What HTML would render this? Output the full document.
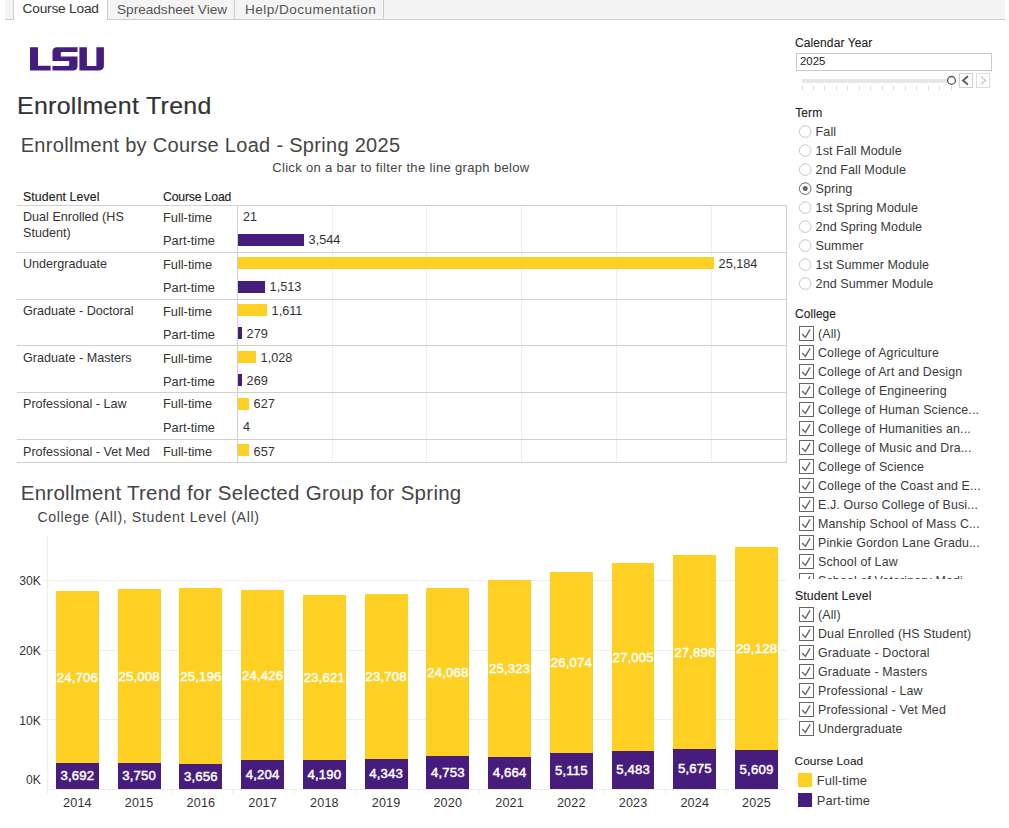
<!DOCTYPE html>
<html><head><meta charset="utf-8"><style>
html,body{margin:0;padding:0;background:#fff;}
body{width:1009px;height:828px;position:relative;overflow:hidden;font-family:"Liberation Sans", sans-serif;}
.t{position:absolute;white-space:nowrap;}
.r{position:absolute;}
</style></head><body>
<div class="r" style="left:5.0px;top:0.0px;width:1000.0px;height:19.0px;background:#f4f4f4;"></div>
<div class="r" style="left:5.0px;top:19.0px;width:1000.0px;height:1.0px;background:#cccccc;"></div>
<div class="r" style="left:13.0px;top:0.0px;width:95.0px;height:20.0px;background:#ffffff;border-left:1px solid #ccc;border-right:1px solid #ccc;box-sizing:border-box;"></div>
<div class="r" style="left:234.0px;top:0.0px;width:1.0px;height:19.0px;background:#cccccc;"></div>
<div class="r" style="left:383.0px;top:0.0px;width:1.0px;height:19.0px;background:#cccccc;"></div>
<div class="t" style="left:22.6px;top:2.3px;font-size:13.7px;line-height:13.7px;color:#333;letter-spacing:-0.2px;">Course Load</div>
<div class="t" style="left:117.0px;top:2.5px;font-size:13.6px;line-height:13.6px;color:#555;">Spreadsheet View</div>
<div class="t" style="left:245.0px;top:2.5px;font-size:13.6px;line-height:13.6px;color:#555;letter-spacing:0.45px;">Help/Documentation</div>
<svg class="r" style="left:0;top:0" width="120" height="80" viewBox="0 0 120 80">
<g fill="#461D7C">
<path d="M30 47.3h8v18.5h12.6v4.6H30z"/>
<path d="M57 47.3H77.5V52H62Q60.8 52 60.8 53.2V56.5H77.5V65.9Q77.5 70.4 73 70.4H52.5V66H68Q69.2 66 69.2 64.8V61H52.5V51.8Q52.5 47.3 57 47.3z"/>
<path d="M79.4 47.3h7.5V66h9.5V47.3h7.5V65.6Q103.9 70.4 99.1 70.4H79.4z"/>
</g></svg>
<div class="t" style="left:17.2px;top:94.9px;font-size:23.6px;line-height:23.6px;color:#333;transform:scaleX(1.055);transform-origin:0 0;letter-spacing:0.3px;-webkit-text-stroke:0.2px #333;">Enrollment Trend</div>
<div class="t" style="left:20.7px;top:134.9px;font-size:20px;line-height:20px;color:#444;letter-spacing:0.3px;">Enrollment by Course Load - Spring 2025</div>
<div class="t" style="left:272.2px;top:160.9px;font-size:13px;line-height:13px;color:#444;letter-spacing:0.34px;">Click on a bar to filter the line graph below</div>
<div class="t" style="left:23.0px;top:190.8px;font-size:12.3px;line-height:12.3px;color:#222;letter-spacing:0.1px;-webkit-text-stroke:0.15px #222;">Student Level</div>
<div class="t" style="left:163.0px;top:190.9px;font-size:12.2px;line-height:12.2px;color:#222;letter-spacing:-0.15px;-webkit-text-stroke:0.15px #222;">Course Load</div>
<div class="r" style="left:332.0px;top:205.0px;width:1.0px;height:257.0px;background:#eeeeee;"></div>
<div class="r" style="left:426.0px;top:205.0px;width:1.0px;height:257.0px;background:#eeeeee;"></div>
<div class="r" style="left:521.0px;top:205.0px;width:1.0px;height:257.0px;background:#eeeeee;"></div>
<div class="r" style="left:616.0px;top:205.0px;width:1.0px;height:257.0px;background:#eeeeee;"></div>
<div class="r" style="left:711.0px;top:205.0px;width:1.0px;height:257.0px;background:#eeeeee;"></div>
<div class="r" style="left:17.0px;top:205.0px;width:770.0px;height:1.0px;background:#d0d0d0;"></div>
<div class="r" style="left:17.0px;top:252.0px;width:770.0px;height:1.0px;background:#d0d0d0;"></div>
<div class="r" style="left:17.0px;top:299.0px;width:770.0px;height:1.0px;background:#d0d0d0;"></div>
<div class="r" style="left:17.0px;top:345.0px;width:770.0px;height:1.0px;background:#d0d0d0;"></div>
<div class="r" style="left:17.0px;top:392.0px;width:770.0px;height:1.0px;background:#d0d0d0;"></div>
<div class="r" style="left:17.0px;top:439.0px;width:770.0px;height:1.0px;background:#d0d0d0;"></div>
<div class="r" style="left:17.0px;top:462.0px;width:770.0px;height:1.0px;background:#d0d0d0;"></div>
<div class="r" style="left:237.0px;top:205.0px;width:1.0px;height:258.0px;background:#d0d0d0;"></div>
<div class="r" style="left:786.0px;top:205.0px;width:1.0px;height:258.0px;background:#d0d0d0;"></div>
<div class="t" style="left:23.0px;top:211.1px;font-size:12.6px;line-height:12.6px;color:#333;">Dual Enrolled (HS</div>
<div class="t" style="left:23.0px;top:226.8px;font-size:12.6px;line-height:12.6px;color:#333;">Student)</div>
<div class="t" style="left:163.0px;top:211.8px;font-size:12.8px;line-height:12.8px;color:#333;">Full-time</div>
<div class="t" style="left:243.0px;top:211.2px;font-size:12.7px;line-height:12.7px;color:#333;">21</div>
<div class="t" style="left:163.0px;top:235.0px;font-size:12.8px;line-height:12.8px;color:#333;">Part-time</div>
<div class="r" style="left:238.0px;top:233.7px;width:66.0px;height:12.0px;background:#461D7C;"></div>
<div class="t" style="left:308.6px;top:234.4px;font-size:12.7px;line-height:12.7px;color:#333;">3,544</div>
<div class="t" style="left:23.0px;top:257.8px;font-size:12.6px;line-height:12.6px;color:#333;">Undergraduate</div>
<div class="t" style="left:163.0px;top:258.5px;font-size:12.8px;line-height:12.8px;color:#333;">Full-time</div>
<div class="r" style="left:238.0px;top:257.1px;width:476.0px;height:12.0px;background:#FDD023;"></div>
<div class="t" style="left:718.6px;top:257.9px;font-size:12.7px;line-height:12.7px;color:#333;">25,184</div>
<div class="t" style="left:163.0px;top:281.7px;font-size:12.8px;line-height:12.8px;color:#333;">Part-time</div>
<div class="r" style="left:238.0px;top:280.5px;width:27.0px;height:12.0px;background:#461D7C;"></div>
<div class="t" style="left:269.6px;top:281.1px;font-size:12.7px;line-height:12.7px;color:#333;">1,513</div>
<div class="t" style="left:23.0px;top:304.9px;font-size:12.6px;line-height:12.6px;color:#333;">Graduate - Doctoral</div>
<div class="t" style="left:163.0px;top:305.6px;font-size:12.8px;line-height:12.8px;color:#333;">Full-time</div>
<div class="r" style="left:238.0px;top:303.9px;width:29.0px;height:12.0px;background:#FDD023;"></div>
<div class="t" style="left:271.6px;top:305.0px;font-size:12.7px;line-height:12.7px;color:#333;">1,611</div>
<div class="t" style="left:163.0px;top:328.8px;font-size:12.8px;line-height:12.8px;color:#333;">Part-time</div>
<div class="r" style="left:238.0px;top:327.3px;width:4.0px;height:12.0px;background:#461D7C;"></div>
<div class="t" style="left:246.6px;top:328.2px;font-size:12.7px;line-height:12.7px;color:#333;">279</div>
<div class="t" style="left:23.0px;top:351.9px;font-size:12.6px;line-height:12.6px;color:#333;">Graduate - Masters</div>
<div class="t" style="left:163.0px;top:352.6px;font-size:12.8px;line-height:12.8px;color:#333;">Full-time</div>
<div class="r" style="left:238.0px;top:350.7px;width:18.0px;height:12.0px;background:#FDD023;"></div>
<div class="t" style="left:260.6px;top:352.0px;font-size:12.7px;line-height:12.7px;color:#333;">1,028</div>
<div class="t" style="left:163.0px;top:375.8px;font-size:12.8px;line-height:12.8px;color:#333;">Part-time</div>
<div class="r" style="left:238.0px;top:374.1px;width:4.0px;height:12.0px;background:#461D7C;"></div>
<div class="t" style="left:246.6px;top:375.2px;font-size:12.7px;line-height:12.7px;color:#333;">269</div>
<div class="t" style="left:23.0px;top:397.7px;font-size:12.6px;line-height:12.6px;color:#333;">Professional - Law</div>
<div class="t" style="left:163.0px;top:398.4px;font-size:12.8px;line-height:12.8px;color:#333;">Full-time</div>
<div class="r" style="left:238.0px;top:397.5px;width:11.0px;height:12.0px;background:#FDD023;"></div>
<div class="t" style="left:253.6px;top:397.8px;font-size:12.7px;line-height:12.7px;color:#333;">627</div>
<div class="t" style="left:163.0px;top:421.6px;font-size:12.8px;line-height:12.8px;color:#333;">Part-time</div>
<div class="t" style="left:243.0px;top:421.0px;font-size:12.7px;line-height:12.7px;color:#333;">4</div>
<div class="t" style="left:23.0px;top:445.6px;font-size:12.6px;line-height:12.6px;color:#333;">Professional - Vet Med</div>
<div class="t" style="left:163.0px;top:446.3px;font-size:12.8px;line-height:12.8px;color:#333;">Full-time</div>
<div class="r" style="left:238.0px;top:444.3px;width:11.0px;height:12.0px;background:#FDD023;"></div>
<div class="t" style="left:253.6px;top:445.7px;font-size:12.7px;line-height:12.7px;color:#333;">657</div>
<div class="t" style="left:20.7px;top:482.5px;font-size:20.5px;line-height:20.5px;color:#444;letter-spacing:0.27px;">Enrollment Trend for Selected Group for Spring</div>
<div class="t" style="left:37.4px;top:510.3px;font-size:14.2px;line-height:14.2px;color:#444;letter-spacing:0.62px;">College (All), Student Level (All)</div>
<div class="r" style="left:47.0px;top:535.0px;width:1.0px;height:254.0px;background:#eeeeee;"></div>
<div class="r" style="left:43.0px;top:719.0px;width:744.0px;height:1.0px;background:#eeeeee;"></div>
<div class="r" style="left:43.0px;top:650.0px;width:744.0px;height:1.0px;background:#eeeeee;"></div>
<div class="r" style="left:43.0px;top:580.0px;width:744.0px;height:1.0px;background:#eeeeee;"></div>
<div class="t" style="left:0.0px;top:714.6px;font-size:12.1px;line-height:12.1px;color:#333;width:40.9px;text-align:right;">10K</div>
<div class="t" style="left:0.0px;top:644.9px;font-size:12.1px;line-height:12.1px;color:#333;width:40.9px;text-align:right;">20K</div>
<div class="t" style="left:0.0px;top:575.2px;font-size:12.1px;line-height:12.1px;color:#333;width:40.9px;text-align:right;">30K</div>
<div class="t" style="left:0.0px;top:774.3px;font-size:12.1px;line-height:12.1px;color:#333;width:40.9px;text-align:right;">0K</div>
<div class="r" style="left:47.0px;top:789.0px;width:740.0px;height:1.0px;background:#eeeeee;"></div>
<div class="r" style="left:47.0px;top:789.0px;width:1.0px;height:5.0px;background:#eeeeee;"></div>
<div class="r" style="left:56.0px;top:591.0px;width:43.0px;height:172.0px;background:#FDD023;"></div>
<div class="r" style="left:56.0px;top:763.0px;width:43.0px;height:26.0px;background:#461D7C;"></div>
<div class="t" style="left:47.4px;top:670.8px;font-size:13.2px;line-height:13.2px;color:#fff;letter-spacing:0.15px;width:60.0px;text-align:center;-webkit-text-stroke:0.45px #fff;">24,706</div>
<div class="t" style="left:47.4px;top:769.3px;font-size:13.2px;line-height:13.2px;color:#fff;letter-spacing:0.15px;width:60.0px;text-align:center;-webkit-text-stroke:0.45px #fff;">3,692</div>
<div class="t" style="left:47.4px;top:796.5px;font-size:12.6px;line-height:12.6px;color:#333;letter-spacing:0.2px;width:60.0px;text-align:center;">2014</div>
<div class="r" style="left:109.0px;top:789.0px;width:1.0px;height:5.0px;background:#eeeeee;"></div>
<div class="r" style="left:118.0px;top:589.0px;width:43.0px;height:174.0px;background:#FDD023;"></div>
<div class="r" style="left:118.0px;top:763.0px;width:43.0px;height:26.0px;background:#461D7C;"></div>
<div class="t" style="left:109.1px;top:669.8px;font-size:13.2px;line-height:13.2px;color:#fff;letter-spacing:0.15px;width:60.0px;text-align:center;-webkit-text-stroke:0.45px #fff;">25,008</div>
<div class="t" style="left:109.1px;top:769.3px;font-size:13.2px;line-height:13.2px;color:#fff;letter-spacing:0.15px;width:60.0px;text-align:center;-webkit-text-stroke:0.45px #fff;">3,750</div>
<div class="t" style="left:109.1px;top:796.5px;font-size:12.6px;line-height:12.6px;color:#333;letter-spacing:0.2px;width:60.0px;text-align:center;">2015</div>
<div class="r" style="left:171.0px;top:789.0px;width:1.0px;height:5.0px;background:#eeeeee;"></div>
<div class="r" style="left:179.0px;top:588.0px;width:43.0px;height:176.0px;background:#FDD023;"></div>
<div class="r" style="left:179.0px;top:764.0px;width:43.0px;height:25.0px;background:#461D7C;"></div>
<div class="t" style="left:170.9px;top:669.8px;font-size:13.2px;line-height:13.2px;color:#fff;letter-spacing:0.15px;width:60.0px;text-align:center;-webkit-text-stroke:0.45px #fff;">25,196</div>
<div class="t" style="left:170.9px;top:769.8px;font-size:13.2px;line-height:13.2px;color:#fff;letter-spacing:0.15px;width:60.0px;text-align:center;-webkit-text-stroke:0.45px #fff;">3,656</div>
<div class="t" style="left:170.9px;top:796.5px;font-size:12.6px;line-height:12.6px;color:#333;letter-spacing:0.2px;width:60.0px;text-align:center;">2016</div>
<div class="r" style="left:232.0px;top:789.0px;width:1.0px;height:5.0px;background:#eeeeee;"></div>
<div class="r" style="left:241.0px;top:590.0px;width:43.0px;height:170.0px;background:#FDD023;"></div>
<div class="r" style="left:241.0px;top:760.0px;width:43.0px;height:29.0px;background:#461D7C;"></div>
<div class="t" style="left:232.6px;top:668.8px;font-size:13.2px;line-height:13.2px;color:#fff;letter-spacing:0.15px;width:60.0px;text-align:center;-webkit-text-stroke:0.45px #fff;">24,426</div>
<div class="t" style="left:232.6px;top:767.8px;font-size:13.2px;line-height:13.2px;color:#fff;letter-spacing:0.15px;width:60.0px;text-align:center;-webkit-text-stroke:0.45px #fff;">4,204</div>
<div class="t" style="left:232.6px;top:796.5px;font-size:12.6px;line-height:12.6px;color:#333;letter-spacing:0.2px;width:60.0px;text-align:center;">2017</div>
<div class="r" style="left:294.0px;top:789.0px;width:1.0px;height:5.0px;background:#eeeeee;"></div>
<div class="r" style="left:303.0px;top:595.0px;width:43.0px;height:165.0px;background:#FDD023;"></div>
<div class="r" style="left:303.0px;top:760.0px;width:43.0px;height:29.0px;background:#461D7C;"></div>
<div class="t" style="left:294.4px;top:671.3px;font-size:13.2px;line-height:13.2px;color:#fff;letter-spacing:0.15px;width:60.0px;text-align:center;-webkit-text-stroke:0.45px #fff;">23,621</div>
<div class="t" style="left:294.4px;top:767.8px;font-size:13.2px;line-height:13.2px;color:#fff;letter-spacing:0.15px;width:60.0px;text-align:center;-webkit-text-stroke:0.45px #fff;">4,190</div>
<div class="t" style="left:294.4px;top:796.5px;font-size:12.6px;line-height:12.6px;color:#333;letter-spacing:0.2px;width:60.0px;text-align:center;">2018</div>
<div class="r" style="left:356.0px;top:789.0px;width:1.0px;height:5.0px;background:#eeeeee;"></div>
<div class="r" style="left:365.0px;top:594.0px;width:43.0px;height:165.0px;background:#FDD023;"></div>
<div class="r" style="left:365.0px;top:759.0px;width:43.0px;height:30.0px;background:#461D7C;"></div>
<div class="t" style="left:356.1px;top:670.3px;font-size:13.2px;line-height:13.2px;color:#fff;letter-spacing:0.15px;width:60.0px;text-align:center;-webkit-text-stroke:0.45px #fff;">23,708</div>
<div class="t" style="left:356.1px;top:767.3px;font-size:13.2px;line-height:13.2px;color:#fff;letter-spacing:0.15px;width:60.0px;text-align:center;-webkit-text-stroke:0.45px #fff;">4,343</div>
<div class="t" style="left:356.1px;top:796.5px;font-size:12.6px;line-height:12.6px;color:#333;letter-spacing:0.2px;width:60.0px;text-align:center;">2019</div>
<div class="r" style="left:418.0px;top:789.0px;width:1.0px;height:5.0px;background:#eeeeee;"></div>
<div class="r" style="left:426.0px;top:588.0px;width:43.0px;height:168.0px;background:#FDD023;"></div>
<div class="r" style="left:426.0px;top:756.0px;width:43.0px;height:33.0px;background:#461D7C;"></div>
<div class="t" style="left:417.8px;top:665.8px;font-size:13.2px;line-height:13.2px;color:#fff;letter-spacing:0.15px;width:60.0px;text-align:center;-webkit-text-stroke:0.45px #fff;">24,068</div>
<div class="t" style="left:417.8px;top:765.8px;font-size:13.2px;line-height:13.2px;color:#fff;letter-spacing:0.15px;width:60.0px;text-align:center;-webkit-text-stroke:0.45px #fff;">4,753</div>
<div class="t" style="left:417.8px;top:796.5px;font-size:12.6px;line-height:12.6px;color:#333;letter-spacing:0.2px;width:60.0px;text-align:center;">2020</div>
<div class="r" style="left:479.0px;top:789.0px;width:1.0px;height:5.0px;background:#eeeeee;"></div>
<div class="r" style="left:488.0px;top:580.0px;width:43.0px;height:177.0px;background:#FDD023;"></div>
<div class="r" style="left:488.0px;top:757.0px;width:43.0px;height:32.0px;background:#461D7C;"></div>
<div class="t" style="left:479.6px;top:662.3px;font-size:13.2px;line-height:13.2px;color:#fff;letter-spacing:0.15px;width:60.0px;text-align:center;-webkit-text-stroke:0.45px #fff;">25,323</div>
<div class="t" style="left:479.6px;top:766.3px;font-size:13.2px;line-height:13.2px;color:#fff;letter-spacing:0.15px;width:60.0px;text-align:center;-webkit-text-stroke:0.45px #fff;">4,664</div>
<div class="t" style="left:479.6px;top:796.5px;font-size:12.6px;line-height:12.6px;color:#333;letter-spacing:0.2px;width:60.0px;text-align:center;">2021</div>
<div class="r" style="left:541.0px;top:789.0px;width:1.0px;height:5.0px;background:#eeeeee;"></div>
<div class="r" style="left:550.0px;top:572.0px;width:43.0px;height:181.0px;background:#FDD023;"></div>
<div class="r" style="left:550.0px;top:753.0px;width:43.0px;height:36.0px;background:#461D7C;"></div>
<div class="t" style="left:541.3px;top:656.3px;font-size:13.2px;line-height:13.2px;color:#fff;letter-spacing:0.15px;width:60.0px;text-align:center;-webkit-text-stroke:0.45px #fff;">26,074</div>
<div class="t" style="left:541.3px;top:764.3px;font-size:13.2px;line-height:13.2px;color:#fff;letter-spacing:0.15px;width:60.0px;text-align:center;-webkit-text-stroke:0.45px #fff;">5,115</div>
<div class="t" style="left:541.3px;top:796.5px;font-size:12.6px;line-height:12.6px;color:#333;letter-spacing:0.2px;width:60.0px;text-align:center;">2022</div>
<div class="r" style="left:603.0px;top:789.0px;width:1.0px;height:5.0px;background:#eeeeee;"></div>
<div class="r" style="left:612.0px;top:563.0px;width:42.0px;height:188.0px;background:#FDD023;"></div>
<div class="r" style="left:612.0px;top:751.0px;width:42.0px;height:38.0px;background:#461D7C;"></div>
<div class="t" style="left:603.1px;top:650.8px;font-size:13.2px;line-height:13.2px;color:#fff;letter-spacing:0.15px;width:60.0px;text-align:center;-webkit-text-stroke:0.45px #fff;">27,005</div>
<div class="t" style="left:603.1px;top:763.3px;font-size:13.2px;line-height:13.2px;color:#fff;letter-spacing:0.15px;width:60.0px;text-align:center;-webkit-text-stroke:0.45px #fff;">5,483</div>
<div class="t" style="left:603.1px;top:796.5px;font-size:12.6px;line-height:12.6px;color:#333;letter-spacing:0.2px;width:60.0px;text-align:center;">2023</div>
<div class="r" style="left:665.0px;top:789.0px;width:1.0px;height:5.0px;background:#eeeeee;"></div>
<div class="r" style="left:673.0px;top:555.0px;width:43.0px;height:194.0px;background:#FDD023;"></div>
<div class="r" style="left:673.0px;top:749.0px;width:43.0px;height:40.0px;background:#461D7C;"></div>
<div class="t" style="left:664.8px;top:645.8px;font-size:13.2px;line-height:13.2px;color:#fff;letter-spacing:0.15px;width:60.0px;text-align:center;-webkit-text-stroke:0.45px #fff;">27,896</div>
<div class="t" style="left:664.8px;top:762.3px;font-size:13.2px;line-height:13.2px;color:#fff;letter-spacing:0.15px;width:60.0px;text-align:center;-webkit-text-stroke:0.45px #fff;">5,675</div>
<div class="t" style="left:664.8px;top:796.5px;font-size:12.6px;line-height:12.6px;color:#333;letter-spacing:0.2px;width:60.0px;text-align:center;">2024</div>
<div class="r" style="left:726.0px;top:789.0px;width:1.0px;height:5.0px;background:#eeeeee;"></div>
<div class="r" style="left:735.0px;top:547.0px;width:43.0px;height:203.0px;background:#FDD023;"></div>
<div class="r" style="left:735.0px;top:750.0px;width:43.0px;height:39.0px;background:#461D7C;"></div>
<div class="t" style="left:726.5px;top:642.3px;font-size:13.2px;line-height:13.2px;color:#fff;letter-spacing:0.15px;width:60.0px;text-align:center;-webkit-text-stroke:0.45px #fff;">29,128</div>
<div class="t" style="left:726.5px;top:762.8px;font-size:13.2px;line-height:13.2px;color:#fff;letter-spacing:0.15px;width:60.0px;text-align:center;-webkit-text-stroke:0.45px #fff;">5,609</div>
<div class="t" style="left:726.5px;top:796.5px;font-size:12.6px;line-height:12.6px;color:#333;letter-spacing:0.2px;width:60.0px;text-align:center;">2025</div>
<div class="t" style="left:795.0px;top:36.8px;font-size:12.0px;line-height:12.0px;color:#222;letter-spacing:0.1px;-webkit-text-stroke:0.1px #222;">Calendar Year</div>
<div class="r" style="left:796.0px;top:53.0px;width:196.0px;height:18.0px;background:#fff;border:1px solid #c8c8c8;box-sizing:border-box;"></div>
<div class="t" style="left:800.0px;top:56.1px;font-size:11.4px;line-height:11.4px;color:#222;">2025</div>
<div class="r" style="left:802.0px;top:79.0px;width:149.0px;height:3.7px;background:#e6e6e6;"></div>
<div class="r" style="left:801.5px;top:86.0px;width:1.0px;height:4.0px;background:#dddddd;"></div>
<div class="r" style="left:813.0px;top:86.0px;width:1.0px;height:4.0px;background:#dddddd;"></div>
<div class="r" style="left:824.4px;top:86.0px;width:1.0px;height:4.0px;background:#dddddd;"></div>
<div class="r" style="left:835.9px;top:86.0px;width:1.0px;height:4.0px;background:#dddddd;"></div>
<div class="r" style="left:847.3px;top:86.0px;width:1.0px;height:4.0px;background:#dddddd;"></div>
<div class="r" style="left:858.8px;top:86.0px;width:1.0px;height:4.0px;background:#dddddd;"></div>
<div class="r" style="left:870.3px;top:86.0px;width:1.0px;height:4.0px;background:#dddddd;"></div>
<div class="r" style="left:881.7px;top:86.0px;width:1.0px;height:4.0px;background:#dddddd;"></div>
<div class="r" style="left:893.2px;top:86.0px;width:1.0px;height:4.0px;background:#dddddd;"></div>
<div class="r" style="left:904.6px;top:86.0px;width:1.0px;height:4.0px;background:#dddddd;"></div>
<div class="r" style="left:916.1px;top:86.0px;width:1.0px;height:4.0px;background:#dddddd;"></div>
<div class="r" style="left:927.6px;top:86.0px;width:1.0px;height:4.0px;background:#dddddd;"></div>
<div class="r" style="left:939.0px;top:86.0px;width:1.0px;height:4.0px;background:#dddddd;"></div>
<div class="r" style="left:950.5px;top:86.0px;width:1.0px;height:4.0px;background:#dddddd;"></div>
<svg class="r" style="left:940px;top:70px" width="60" height="22" viewBox="940 70 60 22"><circle cx="951.5" cy="80.4" r="3.9" fill="#fff" stroke="#555" stroke-width="1.3"/><rect x="959.5" y="73.5" width="13" height="14" fill="#fff" stroke="#cfcfcf" stroke-width="1"/><rect x="976.5" y="73.5" width="13" height="14" fill="#fff" stroke="#dcdcdc" stroke-width="1"/><path d="M968 76.2L963 80.4L968 84.6" fill="none" stroke="#555" stroke-width="1.8"/><path d="M981.2 76.5L985.6 80.4L981.2 84.3" fill="none" stroke="#cccccc" stroke-width="1.5"/></svg>
<div class="t" style="left:795.2px;top:106.6px;font-size:12.0px;line-height:12.0px;color:#222;letter-spacing:0.1px;-webkit-text-stroke:0.1px #222;">Term</div>
<div class="t" style="left:815.6px;top:125.7px;font-size:12.6px;line-height:12.6px;color:#3a3a3a;letter-spacing:0.05px;">Fall</div>
<div class="t" style="left:815.6px;top:144.7px;font-size:12.6px;line-height:12.6px;color:#3a3a3a;letter-spacing:0.05px;">1st Fall Module</div>
<div class="t" style="left:815.6px;top:163.7px;font-size:12.6px;line-height:12.6px;color:#3a3a3a;letter-spacing:0.05px;">2nd Fall Module</div>
<div class="t" style="left:815.6px;top:182.7px;font-size:12.6px;line-height:12.6px;color:#3a3a3a;letter-spacing:0.05px;">Spring</div>
<div class="t" style="left:815.6px;top:201.7px;font-size:12.6px;line-height:12.6px;color:#3a3a3a;letter-spacing:0.05px;">1st Spring Module</div>
<div class="t" style="left:815.6px;top:220.7px;font-size:12.6px;line-height:12.6px;color:#3a3a3a;letter-spacing:0.05px;">2nd Spring Module</div>
<div class="t" style="left:815.6px;top:239.7px;font-size:12.6px;line-height:12.6px;color:#3a3a3a;letter-spacing:0.05px;">Summer</div>
<div class="t" style="left:815.6px;top:258.7px;font-size:12.6px;line-height:12.6px;color:#3a3a3a;letter-spacing:0.05px;">1st Summer Module</div>
<div class="t" style="left:815.6px;top:277.7px;font-size:12.6px;line-height:12.6px;color:#3a3a3a;letter-spacing:0.05px;">2nd Summer Module</div>
<svg class="r" style="left:790px;top:120px" width="30" height="180" viewBox="790 120 30 180"><circle cx="805.2" cy="131.6" r="5.8" fill="#fff" stroke="#c8c8c8" stroke-width="1"/><circle cx="805.2" cy="150.6" r="5.8" fill="#fff" stroke="#c8c8c8" stroke-width="1"/><circle cx="805.2" cy="169.6" r="5.8" fill="#fff" stroke="#c8c8c8" stroke-width="1"/><circle cx="805.2" cy="188.6" r="5.8" fill="#fff" stroke="#666" stroke-width="1"/><circle cx="805.2" cy="188.6" r="2.5" fill="#666"/><circle cx="805.2" cy="207.6" r="5.8" fill="#fff" stroke="#c8c8c8" stroke-width="1"/><circle cx="805.2" cy="226.6" r="5.8" fill="#fff" stroke="#c8c8c8" stroke-width="1"/><circle cx="805.2" cy="245.6" r="5.8" fill="#fff" stroke="#c8c8c8" stroke-width="1"/><circle cx="805.2" cy="264.6" r="5.8" fill="#fff" stroke="#c8c8c8" stroke-width="1"/><circle cx="805.2" cy="283.6" r="5.8" fill="#fff" stroke="#c8c8c8" stroke-width="1"/></svg>
<div class="t" style="left:795.0px;top:308.6px;font-size:11.9px;line-height:11.9px;color:#222;letter-spacing:0.1px;-webkit-text-stroke:0.1px #222;">College</div>
<div class="r" style="left:790px;top:324.4px;width:219px;height:254.60000000000002px;overflow:hidden;">
<div class="r" style="left:9.3px;top:1.6px;width:13px;height:13px;border:1px solid #666;box-sizing:content-box;background:#fff;"></div>
<svg class="r" style="left:9.3px;top:1.6px" width="15" height="15" viewBox="0 0 15 15"><path d="M3.1 8.1L6.4 11.4L11.1 3.4" fill="none" stroke="#666" stroke-width="1.4"/></svg>
<div class="t" style="left:28px;top:3.5px;font-size:12.4px;line-height:12.4px;color:#3a3a3a;letter-spacing:0.15px;">(All)</div>
<div class="r" style="left:9.3px;top:20.6px;width:13px;height:13px;border:1px solid #666;box-sizing:content-box;background:#fff;"></div>
<svg class="r" style="left:9.3px;top:20.6px" width="15" height="15" viewBox="0 0 15 15"><path d="M3.1 8.1L6.4 11.4L11.1 3.4" fill="none" stroke="#666" stroke-width="1.4"/></svg>
<div class="t" style="left:28px;top:22.5px;font-size:12.4px;line-height:12.4px;color:#3a3a3a;letter-spacing:0.15px;">College of Agriculture</div>
<div class="r" style="left:9.3px;top:39.6px;width:13px;height:13px;border:1px solid #666;box-sizing:content-box;background:#fff;"></div>
<svg class="r" style="left:9.3px;top:39.6px" width="15" height="15" viewBox="0 0 15 15"><path d="M3.1 8.1L6.4 11.4L11.1 3.4" fill="none" stroke="#666" stroke-width="1.4"/></svg>
<div class="t" style="left:28px;top:41.5px;font-size:12.4px;line-height:12.4px;color:#3a3a3a;letter-spacing:0.15px;">College of Art and Design</div>
<div class="r" style="left:9.3px;top:58.6px;width:13px;height:13px;border:1px solid #666;box-sizing:content-box;background:#fff;"></div>
<svg class="r" style="left:9.3px;top:58.6px" width="15" height="15" viewBox="0 0 15 15"><path d="M3.1 8.1L6.4 11.4L11.1 3.4" fill="none" stroke="#666" stroke-width="1.4"/></svg>
<div class="t" style="left:28px;top:60.5px;font-size:12.4px;line-height:12.4px;color:#3a3a3a;letter-spacing:0.15px;">College of Engineering</div>
<div class="r" style="left:9.3px;top:77.6px;width:13px;height:13px;border:1px solid #666;box-sizing:content-box;background:#fff;"></div>
<svg class="r" style="left:9.3px;top:77.6px" width="15" height="15" viewBox="0 0 15 15"><path d="M3.1 8.1L6.4 11.4L11.1 3.4" fill="none" stroke="#666" stroke-width="1.4"/></svg>
<div class="t" style="left:28px;top:79.5px;font-size:12.4px;line-height:12.4px;color:#3a3a3a;letter-spacing:0.15px;">College of Human Science...</div>
<div class="r" style="left:9.3px;top:96.6px;width:13px;height:13px;border:1px solid #666;box-sizing:content-box;background:#fff;"></div>
<svg class="r" style="left:9.3px;top:96.6px" width="15" height="15" viewBox="0 0 15 15"><path d="M3.1 8.1L6.4 11.4L11.1 3.4" fill="none" stroke="#666" stroke-width="1.4"/></svg>
<div class="t" style="left:28px;top:98.5px;font-size:12.4px;line-height:12.4px;color:#3a3a3a;letter-spacing:0.15px;">College of Humanities an...</div>
<div class="r" style="left:9.3px;top:115.6px;width:13px;height:13px;border:1px solid #666;box-sizing:content-box;background:#fff;"></div>
<svg class="r" style="left:9.3px;top:115.6px" width="15" height="15" viewBox="0 0 15 15"><path d="M3.1 8.1L6.4 11.4L11.1 3.4" fill="none" stroke="#666" stroke-width="1.4"/></svg>
<div class="t" style="left:28px;top:117.5px;font-size:12.4px;line-height:12.4px;color:#3a3a3a;letter-spacing:0.15px;">College of Music and Dra...</div>
<div class="r" style="left:9.3px;top:134.6px;width:13px;height:13px;border:1px solid #666;box-sizing:content-box;background:#fff;"></div>
<svg class="r" style="left:9.3px;top:134.6px" width="15" height="15" viewBox="0 0 15 15"><path d="M3.1 8.1L6.4 11.4L11.1 3.4" fill="none" stroke="#666" stroke-width="1.4"/></svg>
<div class="t" style="left:28px;top:136.5px;font-size:12.4px;line-height:12.4px;color:#3a3a3a;letter-spacing:0.15px;">College of Science</div>
<div class="r" style="left:9.3px;top:153.6px;width:13px;height:13px;border:1px solid #666;box-sizing:content-box;background:#fff;"></div>
<svg class="r" style="left:9.3px;top:153.6px" width="15" height="15" viewBox="0 0 15 15"><path d="M3.1 8.1L6.4 11.4L11.1 3.4" fill="none" stroke="#666" stroke-width="1.4"/></svg>
<div class="t" style="left:28px;top:155.5px;font-size:12.4px;line-height:12.4px;color:#3a3a3a;letter-spacing:0.15px;">College of the Coast and E...</div>
<div class="r" style="left:9.3px;top:172.6px;width:13px;height:13px;border:1px solid #666;box-sizing:content-box;background:#fff;"></div>
<svg class="r" style="left:9.3px;top:172.6px" width="15" height="15" viewBox="0 0 15 15"><path d="M3.1 8.1L6.4 11.4L11.1 3.4" fill="none" stroke="#666" stroke-width="1.4"/></svg>
<div class="t" style="left:28px;top:174.5px;font-size:12.4px;line-height:12.4px;color:#3a3a3a;letter-spacing:0.15px;">E.J. Ourso College of Busi...</div>
<div class="r" style="left:9.3px;top:191.6px;width:13px;height:13px;border:1px solid #666;box-sizing:content-box;background:#fff;"></div>
<svg class="r" style="left:9.3px;top:191.6px" width="15" height="15" viewBox="0 0 15 15"><path d="M3.1 8.1L6.4 11.4L11.1 3.4" fill="none" stroke="#666" stroke-width="1.4"/></svg>
<div class="t" style="left:28px;top:193.5px;font-size:12.4px;line-height:12.4px;color:#3a3a3a;letter-spacing:0.15px;">Manship School of Mass C...</div>
<div class="r" style="left:9.3px;top:210.6px;width:13px;height:13px;border:1px solid #666;box-sizing:content-box;background:#fff;"></div>
<svg class="r" style="left:9.3px;top:210.6px" width="15" height="15" viewBox="0 0 15 15"><path d="M3.1 8.1L6.4 11.4L11.1 3.4" fill="none" stroke="#666" stroke-width="1.4"/></svg>
<div class="t" style="left:28px;top:212.5px;font-size:12.4px;line-height:12.4px;color:#3a3a3a;letter-spacing:0.15px;">Pinkie Gordon Lane Gradu...</div>
<div class="r" style="left:9.3px;top:229.6px;width:13px;height:13px;border:1px solid #666;box-sizing:content-box;background:#fff;"></div>
<svg class="r" style="left:9.3px;top:229.6px" width="15" height="15" viewBox="0 0 15 15"><path d="M3.1 8.1L6.4 11.4L11.1 3.4" fill="none" stroke="#666" stroke-width="1.4"/></svg>
<div class="t" style="left:28px;top:231.5px;font-size:12.4px;line-height:12.4px;color:#3a3a3a;letter-spacing:0.15px;">School of Law</div>
<div class="r" style="left:9.3px;top:248.6px;width:13px;height:13px;border:1px solid #666;box-sizing:content-box;background:#fff;"></div>
<svg class="r" style="left:9.3px;top:248.6px" width="15" height="15" viewBox="0 0 15 15"><path d="M3.1 8.1L6.4 11.4L11.1 3.4" fill="none" stroke="#666" stroke-width="1.4"/></svg>
<div class="t" style="left:28px;top:250.5px;font-size:12.4px;line-height:12.4px;color:#3a3a3a;letter-spacing:0.15px;">School of Veterinary Medi...</div>
</div>
<div class="t" style="left:795.0px;top:589.5px;font-size:12.3px;line-height:12.3px;color:#222;letter-spacing:0.1px;-webkit-text-stroke:0.1px #222;">Student Level</div>
<div class="r" style="left:790px;top:605.8px;width:219px;height:135px;overflow:hidden;">
<div class="r" style="left:9.3px;top:1.6px;width:13px;height:13px;border:1px solid #666;box-sizing:content-box;background:#fff;"></div>
<svg class="r" style="left:9.3px;top:1.6px" width="15" height="15" viewBox="0 0 15 15"><path d="M3.1 8.1L6.4 11.4L11.1 3.4" fill="none" stroke="#666" stroke-width="1.4"/></svg>
<div class="t" style="left:28px;top:3.5px;font-size:12.4px;line-height:12.4px;color:#3a3a3a;letter-spacing:0.15px;">(All)</div>
<div class="r" style="left:9.3px;top:20.6px;width:13px;height:13px;border:1px solid #666;box-sizing:content-box;background:#fff;"></div>
<svg class="r" style="left:9.3px;top:20.6px" width="15" height="15" viewBox="0 0 15 15"><path d="M3.1 8.1L6.4 11.4L11.1 3.4" fill="none" stroke="#666" stroke-width="1.4"/></svg>
<div class="t" style="left:28px;top:22.5px;font-size:12.4px;line-height:12.4px;color:#3a3a3a;letter-spacing:0.15px;">Dual Enrolled (HS Student)</div>
<div class="r" style="left:9.3px;top:39.6px;width:13px;height:13px;border:1px solid #666;box-sizing:content-box;background:#fff;"></div>
<svg class="r" style="left:9.3px;top:39.6px" width="15" height="15" viewBox="0 0 15 15"><path d="M3.1 8.1L6.4 11.4L11.1 3.4" fill="none" stroke="#666" stroke-width="1.4"/></svg>
<div class="t" style="left:28px;top:41.5px;font-size:12.4px;line-height:12.4px;color:#3a3a3a;letter-spacing:0.15px;">Graduate - Doctoral</div>
<div class="r" style="left:9.3px;top:58.6px;width:13px;height:13px;border:1px solid #666;box-sizing:content-box;background:#fff;"></div>
<svg class="r" style="left:9.3px;top:58.6px" width="15" height="15" viewBox="0 0 15 15"><path d="M3.1 8.1L6.4 11.4L11.1 3.4" fill="none" stroke="#666" stroke-width="1.4"/></svg>
<div class="t" style="left:28px;top:60.5px;font-size:12.4px;line-height:12.4px;color:#3a3a3a;letter-spacing:0.15px;">Graduate - Masters</div>
<div class="r" style="left:9.3px;top:77.6px;width:13px;height:13px;border:1px solid #666;box-sizing:content-box;background:#fff;"></div>
<svg class="r" style="left:9.3px;top:77.6px" width="15" height="15" viewBox="0 0 15 15"><path d="M3.1 8.1L6.4 11.4L11.1 3.4" fill="none" stroke="#666" stroke-width="1.4"/></svg>
<div class="t" style="left:28px;top:79.5px;font-size:12.4px;line-height:12.4px;color:#3a3a3a;letter-spacing:0.15px;">Professional - Law</div>
<div class="r" style="left:9.3px;top:96.6px;width:13px;height:13px;border:1px solid #666;box-sizing:content-box;background:#fff;"></div>
<svg class="r" style="left:9.3px;top:96.6px" width="15" height="15" viewBox="0 0 15 15"><path d="M3.1 8.1L6.4 11.4L11.1 3.4" fill="none" stroke="#666" stroke-width="1.4"/></svg>
<div class="t" style="left:28px;top:98.5px;font-size:12.4px;line-height:12.4px;color:#3a3a3a;letter-spacing:0.15px;">Professional - Vet Med</div>
<div class="r" style="left:9.3px;top:115.6px;width:13px;height:13px;border:1px solid #666;box-sizing:content-box;background:#fff;"></div>
<svg class="r" style="left:9.3px;top:115.6px" width="15" height="15" viewBox="0 0 15 15"><path d="M3.1 8.1L6.4 11.4L11.1 3.4" fill="none" stroke="#666" stroke-width="1.4"/></svg>
<div class="t" style="left:28px;top:117.5px;font-size:12.4px;line-height:12.4px;color:#3a3a3a;letter-spacing:0.15px;">Undergraduate</div>
</div>
<div class="t" style="left:794.6px;top:755.8px;font-size:11.8px;line-height:11.8px;color:#222;letter-spacing:0.1px;-webkit-text-stroke:0.1px #222;">Course Load</div>
<div class="r" style="left:798.0px;top:773.2px;width:14.0px;height:14.0px;background:#FDD023;"></div>
<div class="r" style="left:798.0px;top:793.3px;width:14.0px;height:14.0px;background:#461D7C;"></div>
<div class="t" style="left:816.8px;top:774.7px;font-size:12.9px;line-height:12.9px;color:#3a3a3a;letter-spacing:0.1px;">Full-time</div>
<div class="t" style="left:816.8px;top:794.9px;font-size:12.9px;line-height:12.9px;color:#3a3a3a;letter-spacing:0.1px;">Part-time</div>
</body></html>
